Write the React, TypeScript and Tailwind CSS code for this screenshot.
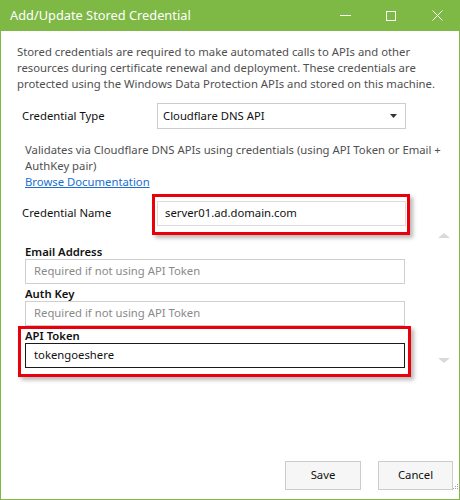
import React from 'react';

const FONT = "font-['Segoe_UI','Noto_Sans',sans-serif]";

function TitleBar() {
  return (
    <div className="h-[31px] bg-[#7eb845] flex items-center shrink-0">
      <span className="ml-[10px] text-[12.8px] text-white leading-none">Add/Update Stored Credential</span>
      <div className="ml-auto flex items-center h-full">
        <div className="w-[46px] h-full flex items-center justify-center">
          <div className="w-[11px] h-px bg-white" />
        </div>
        <div className="w-[46px] h-full flex items-center justify-center">
          <div className="w-[10px] h-[10px] border border-white" />
        </div>
        <div className="w-[46px] h-full flex items-center justify-center">
          <svg width="11" height="11" viewBox="0 0 11 11">
            <path d="M0.5 0.5 L10.5 10.5 M10.5 0.5 L0.5 10.5" stroke="white" strokeWidth="1" />
          </svg>
        </div>
      </div>
    </div>
  );
}

function RedBox({ className }: { className: string }) {
  return (
    <div
      className={`absolute border-[3px] border-[#e8000b] shadow-[3px_3px_4px_rgba(0,0,0,0.28)] pointer-events-none ${className}`}
    />
  );
}

function Field({ label, placeholder, value, dark }: { label: string; placeholder?: string; value?: string; dark?: boolean }) {
  return (
    <div className="flex flex-col">
      <label className="h-[15px] leading-[15px] text-[11.3px] font-semibold text-[#111]">{label}</label>
      <div
        className={`h-[25px] w-[380px] flex items-center px-[8px] text-[11.3px] border ${
          dark ? 'border-[#1a1a1a] text-[#111]' : 'border-[#cfcfcf] text-[#8a8a8a]'
        }`}
      >
        {value ?? placeholder}
      </div>
    </div>
  );
}

export default function App() {
  return (
    <div className={`w-[460px] h-[500px] flex flex-col bg-white ${FONT}`}>
      <TitleBar />
      <div className="flex-1 flex flex-col border-x border-b border-[#7eb845] pl-[16px]">
        <p className="mt-[13px] text-[11.3px] leading-[16px] text-[#505050] whitespace-nowrap">
          Stored credentials are required to make automated calls to APIs and other
          <br />
          resources during certificate renewal and deployment. These credentials are
          <br />
          protected using the Windows Data Protection APIs and stored on this machine.
        </p>

        <div className="mt-[11px] flex items-center">
          <span className="ml-[5px] w-[135px] text-[11.3px] text-[#111]">Credential Type</span>
          <div className="h-[26px] w-[249px] border border-[#cccccc] flex items-center pl-[5px] pr-[8px] text-[11.3px] text-[#111]">
            <span>Cloudflare DNS API</span>
            <svg className="ml-auto" width="7" height="4" viewBox="0 0 7 4">
              <path d="M0 0 H7 L3.5 4 Z" fill="#333" />
            </svg>
          </div>
        </div>

        <div className="mt-[13px] ml-[8px] text-[11.3px] leading-[16px] text-[#505050]">
          <div className="whitespace-nowrap">
            Validates via Cloudflare DNS APIs using credentials (using API Token or Email +
          </div>
          <div>AuthKey pair)</div>
          <a className="text-[#1a6fd1] underline">Browse Documentation</a>
        </div>

        <div className="mt-[11px] flex items-center">
          <span className="ml-[5px] w-[135px] text-[11.3px] text-[#111]">Credential Name</span>
          <div className="relative">
            <div className="h-[25px] w-[249px] border border-[#dcdcdc] flex items-center px-[7px] text-[11.3px] text-[#111]">
              server01.ad.domain.com
            </div>
            <RedBox className="-left-[5px] -right-[4px] -top-[7px] -bottom-[9px]" />
          </div>
        </div>

        <div className="flex">
          <div className="mt-[18px] ml-[8px] flex flex-col gap-[2px]">
            <Field label="Email Address" placeholder="Required if not using API Token" />
            <Field label="Auth Key" placeholder="Required if not using API Token" />
            <div className="relative">
              <Field label="API Token" value="tokengoeshere" dark />
              <RedBox className="-left-[7px] -right-[6px] -top-[2px] -bottom-[9px]" />
            </div>
          </div>
          <div className="ml-[33px] mt-[7px] h-[130px] flex flex-col justify-between">
            <svg width="12" height="5" viewBox="0 0 12 5">
              <path d="M0 5 L6 0 L12 5 Z" fill="#dadada" />
            </svg>
            <svg width="12" height="5" viewBox="0 0 12 5">
              <path d="M0 0 L12 0 L6 5 Z" fill="#dadada" />
            </svg>
          </div>
        </div>

        <div className="mt-auto mb-[9px] flex items-end">
          <div className="ml-auto flex gap-[17px]">
            <button className="h-[29px] w-[76px] bg-[#f6f6f6] border border-[#cccccc] text-[11.3px] text-[#111]">
              Save
            </button>
            <button className="h-[29px] w-[75px] bg-[#f6f6f6] border border-[#cccccc] text-[11.3px] text-[#111]">
              Cancel
            </button>
          </div>
          <div className="w-[6px] h-[9px] relative">
            <svg className="absolute left-[-2px] top-[-1px]" width="10" height="10" viewBox="0 0 10 10">
              {[
                [8, 2], [6, 4], [8, 4], [4, 6], [6, 6], [8, 6], [2, 8], [4, 8], [6, 8], [8, 8],
              ].map(([x, y], i) => (
                <rect key={i} x={x} y={y} width="1" height="1" fill="#a0a0a0" />
              ))}
            </svg>
          </div>
        </div>
      </div>
    </div>
  );
}
